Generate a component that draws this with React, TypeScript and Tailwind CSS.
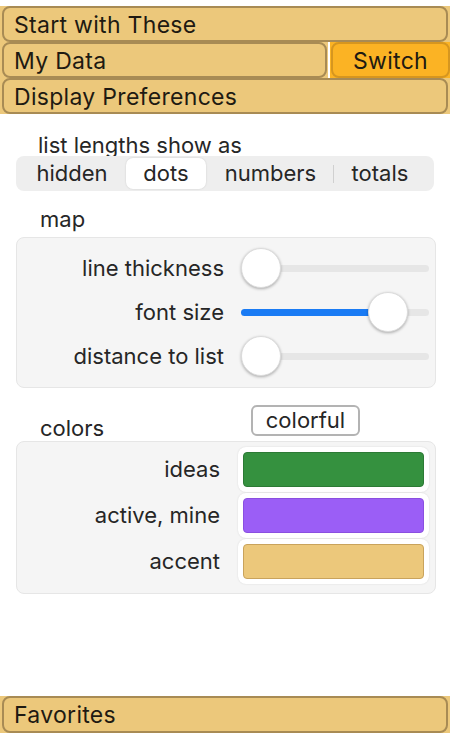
import React, { useState } from "react";

const segments = [
  { label: "hidden", w: "w-[104px]" },
  { label: "dots", w: "w-[80px]" },
  { label: "numbers", w: "w-[125px]" },
  { label: "totals", w: "w-[88px]" },
];

function Slider({ value }: { value: number }) {
  // value 0..1, thumb is 40px, track is 188px wide
  const left = value * 148;
  return (
    <div className="relative w-[188px] h-[40px] flex items-center">
      <div className="w-full h-[7px] rounded-full bg-[#e6e6e6]" />
      {value > 0 && (
        <div
          className="absolute left-0 h-[7px] rounded-full bg-[#1a7bf4]"
          style={{ width: left + 20 }}
        />
      )}
      <div
        className="absolute top-0 w-[40px] h-[40px] rounded-full bg-white shadow-[0_1px_3px_rgba(0,0,0,0.3)] border border-[#dcdcdc]"
        style={{ left }}
      />
    </div>
  );
}

function SliderRow({ label, value }: { label: string; value: number }) {
  return (
    <div className="flex items-center h-[44px]">
      <div className="w-[207px] text-right text-[22px] text-[#262626]">{label}</div>
      <div className="ml-[17px]">
        <Slider value={value} />
      </div>
    </div>
  );
}

function ColorRow({ label, color, border }: { label: string; color: string; border: string }) {
  return (
    <div className="flex items-center">
      <div className="w-[203px] text-right text-[22px] text-[#262626]">{label}</div>
      <div className="ml-[18px] w-[191px] h-[45px] p-[5px] bg-white rounded-[8px] shadow-[0_0_2px_rgba(0,0,0,0.12)]">
        <div className={`w-full h-full rounded-[4px] border ${color} ${border}`} />
      </div>
    </div>
  );
}

export default function App() {
  const [mode, setMode] = useState("dots");

  return (
    <div className="flex flex-col w-[458px] h-[742px] bg-white font-['Inter',sans-serif] text-[#1e1a12] overflow-hidden">
      <div className="mt-[6px] w-[450px] bg-[#ecc87b] flex flex-col">
        <div className="mx-[2px] h-[36px] rounded-[8px] border-2 border-[#a88b54] flex items-center pl-[10px] pt-[2px] text-[23px] tracking-[0.3px]">
          Start with These
        </div>
        <div className="flex h-[36px]">
          <div className="ml-[2px] w-[325px] rounded-[8px] border-2 border-[#a88b54] flex items-center pl-[10px] pt-[2px] text-[23px] tracking-[0.3px]">
            My Data
          </div>
          <div className="ml-[1px] w-[2px] bg-white" />
          <div className="flex-1 bg-[#fbb324] flex">
            <div className="ml-[1px] flex-1 rounded-[8px] border-2 border-[#d6961f] flex items-center justify-center pt-[2px] text-[23px] tracking-[0.3px]">
              Switch
            </div>
          </div>
        </div>
        <div className="mx-[2px] h-[36px] rounded-[8px] border-2 border-[#a88b54] flex items-center pl-[10px] pt-[2px] text-[23px] tracking-[0.3px]">
          Display Preferences
        </div>
      </div>

      <div className="flex flex-col px-4 text-[#262626]">
        <div className="mt-[19px] pl-[22px] text-[22px] leading-[24px]">list lengths show as</div>
        <div className="mt-[-1px] w-[418px] h-[35px] rounded-[8px] bg-[#eeeeee] flex items-center px-[2px]">
          {segments.map((s, i) => (
            <React.Fragment key={s.label}>
              {i === 3 && <div className="w-[1px] h-[18px] bg-[#d0d0d0]" />}
              <button
                onClick={() => setMode(s.label)}
                className={`${s.w} h-[31px] ml-[2px] rounded-[7px] text-[22px] flex items-center justify-center ${
                  mode === s.label ? "bg-white shadow-[0_0_2px_rgba(0,0,0,0.15)]" : ""
                }`}
              >
                {s.label}
              </button>
            </React.Fragment>
          ))}
        </div>

        <div className="mt-[16px] pl-[24px] text-[22px] leading-[24px]">map</div>
        <div className="mt-[6px] w-[420px] h-[151px] rounded-[8px] bg-[#f5f5f5] border border-[#e6e6e6] flex flex-col pt-[8px]">
          <SliderRow label="line thickness" value={0} />
          <SliderRow label="font size" value={0.86} />
          <SliderRow label="distance to list" value={0} />
        </div>

        <div className="mt-[17px] flex items-end h-[31px]">
          <div className="pl-[24px] w-[235px] text-[22px] leading-[24px] mb-[-4px]">colors</div>
          <button className="w-[109px] h-[31px] rounded-[6px] border-2 border-[#b3b3b3] bg-white text-[22px] flex items-center justify-center">
            colorful
          </button>
        </div>
        <div className="mt-[5px] w-[420px] h-[153px] rounded-[8px] bg-[#f5f5f5] border border-[#e6e6e6] flex flex-col gap-[1px] pt-[5px]">
          <ColorRow label="ideas" color="bg-[#35913f]" border="border-[#2c7a35]" />
          <ColorRow label="active, mine" color="bg-[#9b5ef6]" border="border-[#8a4fe0]" />
          <ColorRow label="accent" color="bg-[#ecc87b]" border="border-[#c9a35c]" />
        </div>
      </div>

      <div className="mt-auto mb-[9px] w-[450px] bg-[#ecc87b]">
        <div className="mx-[2px] h-[37px] rounded-[8px] border-2 border-[#a88b54] flex items-center pl-[10px] pt-[2px] text-[23px] tracking-[0.3px]">
          Favorites
        </div>
      </div>
    </div>
  );
}
